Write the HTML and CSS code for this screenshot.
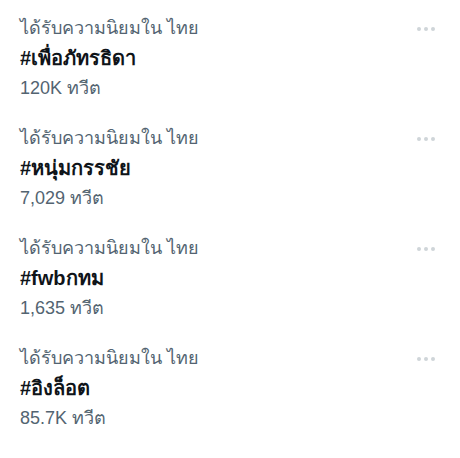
FILE: index.html
```html
<!DOCTYPE html>
<html lang="th">
<head>
    <meta charset="UTF-8">
    <meta name="viewport" content="width=device-width, initial-scale=1.0">
    <title>Trends</title>
    <link rel="stylesheet" href="styles.css">
</head>
<body>
    <div class="trends">
        <div class="trend">
            <div class="trend-info">
                <div class="trend-meta">ได้รับความนิยมใน ไทย</div>
                <div class="trend-name">#เพื่อภัทรธิดา</div>
                <div class="trend-count">120K ทวีต</div>
            </div>
            <div class="more"><span></span><span></span><span></span></div>
        </div>
        <div class="trend">
            <div class="trend-info">
                <div class="trend-meta">ได้รับความนิยมใน ไทย</div>
                <div class="trend-name">#หนุ่มกรรชัย</div>
                <div class="trend-count">7,029 ทวีต</div>
            </div>
            <div class="more"><span></span><span></span><span></span></div>
        </div>
        <div class="trend">
            <div class="trend-info">
                <div class="trend-meta">ได้รับความนิยมใน ไทย</div>
                <div class="trend-name">#fwbกทม</div>
                <div class="trend-count">1,635 ทวีต</div>
            </div>
            <div class="more"><span></span><span></span><span></span></div>
        </div>
        <div class="trend">
            <div class="trend-info">
                <div class="trend-meta">ได้รับความนิยมใน ไทย</div>
                <div class="trend-name">#อิงล็อต</div>
                <div class="trend-count">85.7K ทวีต</div>
            </div>
            <div class="more"><span></span><span></span><span></span></div>
        </div>
    </div>
</body>
</html>
```

FILE: styles.css
```css
body {
    margin: 0;
    padding: 0;
    background: #ffffff;
    font-family: "Liberation Sans", "Noto Sans", sans-serif;
    color: #0f1419;
}
.trends {
    display: flex;
    flex-direction: column;
    padding-top: 13px;
}
.trend {
    display: flex;
    justify-content: space-between;
    height: 110px;
    padding: 0 25px 0 20px;
    box-sizing: border-box;
}
.trend-meta,
.trend-count {
    font-size: 18px;
    line-height: 30px;
    color: #536471;
}
.trend-name {
    font-size: 20px;
    font-weight: bold;
    line-height: 30px;
}
.more {
    display: flex;
    gap: 3px;
    padding-top: 14px;
}
.more span {
    width: 4px;
    height: 4px;
    border-radius: 50%;
    background: #cfd5d9;
}
```
